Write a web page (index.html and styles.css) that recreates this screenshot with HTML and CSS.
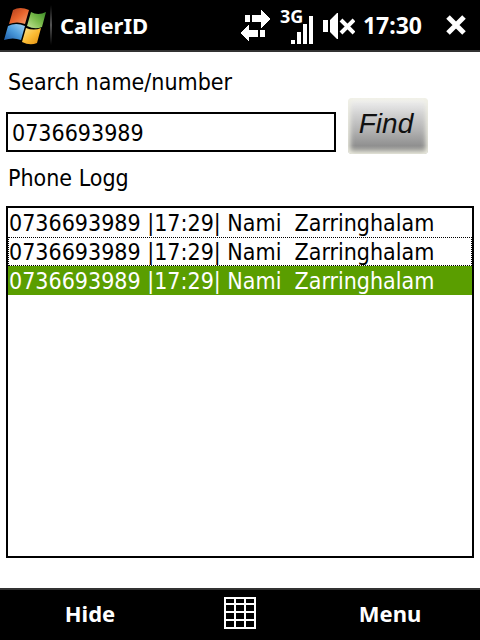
FILE: index.html
```html
<!DOCTYPE html>
<html lang="en">

<head>
  <meta charset="utf-8" />
  <title>CallerID</title>
  <meta name="viewport" content="width=device-width, initial-scale=1" />
  <link rel="stylesheet" href="styles.css">
</head>

<body>
  <header class="status-bar">
    <button class="start" type="button" aria-label="Start">
      <svg width="44" height="40" viewBox="0 0 44 40">
        <defs>
          <linearGradient id="red" x1="0" y1="0" x2="1" y2="1">
            <stop offset="0" stop-color="#a83a1c" />
            <stop offset="0.5" stop-color="#e8642c" />
            <stop offset="1" stop-color="#f8a070" />
          </linearGradient>
          <linearGradient id="green" x1="1" y1="0" x2="0" y2="1">
            <stop offset="0" stop-color="#3c8c28" />
            <stop offset="0.5" stop-color="#7cbc4c" />
            <stop offset="1" stop-color="#c4e498" />
          </linearGradient>
          <linearGradient id="blue" x1="0" y1="1" x2="1" y2="0">
            <stop offset="0" stop-color="#1c5ca8" />
            <stop offset="0.5" stop-color="#4c9cdc" />
            <stop offset="1" stop-color="#a4d4f4" />
          </linearGradient>
          <linearGradient id="yellow" x1="1" y1="1" x2="0" y2="0">
            <stop offset="0" stop-color="#e08c10" />
            <stop offset="0.5" stop-color="#fcbc34" />
            <stop offset="1" stop-color="#fce490" />
          </linearGradient>
        </defs>
        <path fill="url(#red)" d="M9 5Q16 1 25 5L21 19Q13 16 5 19Z" />
        <path fill="url(#green)" d="M27 7Q34 11 42 7L38 22Q31 25 23 21Z" />
        <path fill="url(#blue)" d="M4 21Q12 17 21 21L17 35Q9 32 0 35Z" />
        <path fill="url(#yellow)" d="M22 23Q30 26 37 23L33 38Q26 41 18 37Z" />
      </svg>
    </button>
    <span class="divider"></span>
    <h1 class="title">CallerID</h1>
    <div class="indicators">
      <svg width="32" height="36" viewBox="0 0 32 36" fill="#fff" shape-rendering="crispEdges">
        <path d="M6 7h5v7H6zM13 7h9V2l9 9-9 9v-6h-9z" />
        <path d="M26 22h-5v7h5zM19 22h-9v-5l-9 8 9 9v-5h9z" />
      </svg>
      <svg width="36" height="48" viewBox="0 -6 36 48" fill="#fff">
        <text class="network" x="1" y="15">3G</text>
        <path d="M12 32h4v4h-4zM18 24h4v12h-4zM24 16h4v20h-4zM30 8h4v28h-4z" />
      </svg>
      <svg width="32" height="36" viewBox="0 0 32 36" fill="#fff">
        <path d="M0 12h5v12H0zM7 12l7-7h1v26h-1l-7-7z" />
        <path d="M18 12L31 25M31 12L18 25" fill="none" stroke="#fff" stroke-width="4" />
      </svg>
    </div>
    <time class="clock">17:30</time>
    <button class="close" type="button" aria-label="Close">
      <svg width="20" height="20" viewBox="0 0 20 20">
        <path d="M2 2L18 18M18 2L2 18" fill="none" stroke="#fff" stroke-width="5" />
      </svg>
    </button>
  </header>

  <main class="content">
    <label class="label" for="search">Search name/number</label>
    <div class="search-row">
      <input class="search" id="search" type="text" value="0736693989" />
      <button class="find" type="button">Find</button>
    </div>
    <label class="label log-label" for="log">Phone Logg</label>
    <select class="log" id="log" size="12">
      <option>0736693989 |17:29| Nami&nbsp; Zarringhalam</option>
      <option class="focused">0736693989 |17:29| Nami&nbsp; Zarringhalam</option>
      <option selected>0736693989 |17:29| Nami&nbsp; Zarringhalam</option>
    </select>
  </main>

  <footer class="menu-bar">
    <button class="soft-key" type="button">Hide</button>
    <button class="keyboard" type="button" aria-label="Keyboard">
      <svg width="32" height="32" viewBox="0 0 32 32" fill="#fff" shape-rendering="crispEdges">
        <path d="M0 0h2v32H0zM10 0h2v32h-2zM20 0h2v32h-2zM30 0h2v32h-2z" />
        <path d="M0 0h32v2H0zM0 6h32v2H0zM0 14h32v2H0zM0 22h32v2H0zM0 30h32v2H0z" />
      </svg>
    </button>
    <button class="soft-key" type="button">Menu</button>
  </footer>
</body>

</html>
```

FILE: styles.css
```css
* {
  box-sizing: border-box;
}

body {
  margin: 0;
  min-height: 100vh;
  display: flex;
  flex-direction: column;
  background: #fff;
  color: #000;
  font-family: "DejaVu Sans Condensed", "Noto Sans", sans-serif;
  font-size: 23px;
}

button {
  padding: 0;
  border: 0;
  background: none;
  color: inherit;
  font: inherit;
}

svg {
  display: block;
}

.status-bar,
.menu-bar {
  background: #000;
  color: #fff;
  font-family: "Noto Sans", sans-serif;
  font-size: 22px;
  font-weight: bold;
}

.status-bar {
  display: flex;
  align-items: center;
  height: 52px;
  padding: 0 14px 0 4px;
  border-bottom: 2px solid #333;
}

.divider {
  width: 2px;
  height: 40px;
  margin: 0 8px 0 2px;
  background: linear-gradient(#000, #555, #000);
}

.title {
  margin: 0;
  font-size: 22px;
}

.indicators {
  display: flex;
  align-items: center;
  gap: 8px;
  margin-left: auto;
  padding-top: 2px;
}

.network {
  font-size: 18px;
}

.clock {
  margin: 0 24px 0 8px;
  font-size: 23px;
}

.content {
  flex: 1;
  display: flex;
  flex-direction: column;
  padding: 14px 6px 30px;
}

.label {
  padding-left: 2px;
  line-height: 32px;
}

.search-row {
  display: flex;
  align-items: flex-end;
  gap: 12px;
  padding-right: 46px;
}

.search {
  flex: 1;
  min-width: 0;
  height: 40px;
  margin-bottom: 2px;
  padding: 2px 4px 0;
  border: 2px solid #000;
  border-radius: 0;
  outline: none;
  font: inherit;
}

.find {
  width: 80px;
  height: 56px;
  padding: 0 4px 4px 0;
  border-radius: 4px;
  background: linear-gradient(#f4f4f4, #d0d0d0 30%, #b0b0b0 60%, #909090 85%, #b0b0a8);
  box-shadow: inset 0 0 5px 2px #f0f0e4;
  color: #111;
  font-family: "Liberation Sans", Arial, sans-serif;
  font-size: 28px;
  font-style: italic;
}

.log-label {
  margin: 8px 0 12px;
}

.log {
  flex: 1;
  width: 100%;
  padding: 0;
  border: 2px solid #000;
  border-radius: 0;
  outline: none;
  background: #fff;
  font: inherit;
  overflow: hidden;
}

.log option {
  height: 29px;
  min-height: 29px;
  padding: 2px 1px 0;
  color: #000;
}

.log .focused {
  outline: 1px dotted #000;
  outline-offset: -1px;
}

.log option:checked {
  background: #5a9e00 linear-gradient(#5a9e00, #5a9e00);
  -webkit-text-fill-color: #fff;
}

.menu-bar {
  display: grid;
  grid-template-columns: 1fr 32px 1fr;
  align-items: center;
  gap: 44px;
  height: 52px;
  padding-bottom: 4px;
  border-top: 2px solid #333;
}
```
